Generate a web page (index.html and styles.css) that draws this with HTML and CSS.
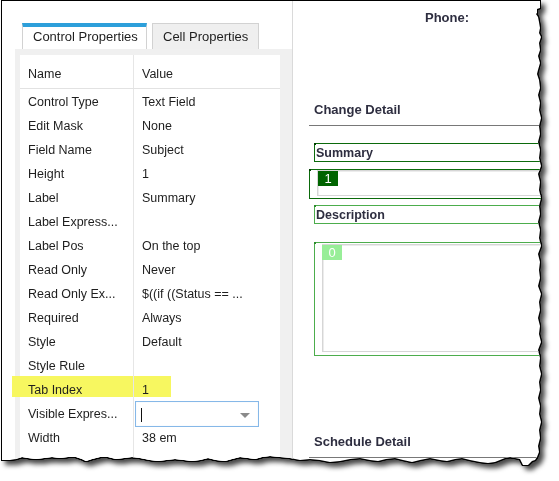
FILE: index.html
```html
<!DOCTYPE html>
<html>
<head>
<meta charset="utf-8">
<link rel="stylesheet" href="styles.css">
</head>
<body>
<div class="shot">
  <div class="paper">
    <div class="left">
      <div class="tabs">
        <div class="tab tab-active">Control Properties</div>
        <div class="tab tab-idle">Cell Properties</div>
      </div>
      <div class="panel">
        <div class="props">
          <div class="row head"><div class="c-name">Name</div><div class="c-val">Value</div></div>
          <div class="row"><div class="c-name">Control Type</div><div class="c-val">Text Field</div></div>
          <div class="row"><div class="c-name">Edit Mask</div><div class="c-val">None</div></div>
          <div class="row"><div class="c-name">Field Name</div><div class="c-val">Subject</div></div>
          <div class="row"><div class="c-name">Height</div><div class="c-val">1</div></div>
          <div class="row"><div class="c-name">Label</div><div class="c-val">Summary</div></div>
          <div class="row"><div class="c-name">Label Express...</div><div class="c-val"></div></div>
          <div class="row"><div class="c-name">Label Pos</div><div class="c-val">On the top</div></div>
          <div class="row"><div class="c-name">Read Only</div><div class="c-val">Never</div></div>
          <div class="row"><div class="c-name">Read Only Ex...</div><div class="c-val">$((if ((Status == ...</div></div>
          <div class="row"><div class="c-name">Required</div><div class="c-val">Always</div></div>
          <div class="row"><div class="c-name">Style</div><div class="c-val">Default</div></div>
          <div class="row"><div class="c-name">Style Rule</div><div class="c-val"></div></div>
          <div class="row marked"><span class="hilite"></span><div class="c-name">Tab Index</div><div class="c-val">1</div></div>
          <div class="row"><div class="c-name">Visible Expres...</div><div class="c-val c-edit"><div class="combo"><span class="caret"></span><span class="arrow"></span></div></div></div>
          <div class="row"><div class="c-name">Width</div><div class="c-val">38 em</div></div>
          <div class="row"><div class="c-name"></div><div class="c-val"></div></div>
        </div>
      </div>
    </div>
    <div class="splitter"></div>
    <div class="right">
      <div class="phone">Phone:</div>
      <div class="sect sect-change">Change Detail</div>
      <div class="lbl lbl-dark">Summary</div>
      <div class="field field-dark"><div class="inner inner-1"><span class="badge badge-dark">1</span></div></div>
      <div class="lbl lbl-light">Description</div>
      <div class="field field-light"><div class="inner inner-2"><span class="badge badge-light">0</span></div></div>
      <div class="sect sect-sched">Schedule Detail</div>
    </div>
  </div>
</div>
</body>
</html>
```
FILE: styles.css
```css
html, body {
  margin: 0;
  padding: 0;
  background: #ffffff;
}
body {
  width: 559px;
  height: 481px;
  overflow: hidden;
  font-family: "Liberation Sans", Arial, sans-serif;
  color: #1e1e1e;
}
.shot {
  width: 559px;
  height: 481px;
  filter: drop-shadow(1px 0 0 #000) drop-shadow(-1px 0 0 #000) drop-shadow(0 1px 0 #000) drop-shadow(0 -1px 0 #000) drop-shadow(4px 4px 2.5px rgba(0,0,0,0.72));
}
.paper {
  width: 559px;
  height: 481px;
  background: #ffffff;
  display: flex;
  overflow: hidden;
  clip-path: polygon(2px 1px, 540px 1px, 540px 8px, 537px 9px, 537px 13px, 536px 14px, 538px 17px, 539px 22px, 540px 28px, 539px 33px, 541px 37px, 539px 43px, 540px 50px, 538px 56px, 540px 63px, 538px 70px, 537px 74px, 539px 80px, 540px 88px, 538px 95px, 540px 103px, 539px 110px, 541px 118px, 539px 126px, 540px 134px, 538px 142px, 540px 150px, 539px 158px, 541px 166px, 538px 174px, 540px 182px, 539px 190px, 541px 198px, 539px 206px, 540px 214px, 538px 222px, 540px 230px, 539px 238px, 541px 246px, 538px 254px, 540px 262px, 539px 270px, 540px 278px, 538px 286px, 541px 294px, 539px 302px, 540px 310px, 538px 318px, 540px 326px, 539px 334px, 541px 342px, 538px 350px, 540px 358px, 539px 366px, 541px 374px, 539px 382px, 540px 390px, 538px 398px, 540px 406px, 539px 414px, 541px 422px, 539px 430px, 540px 438px, 538px 446px, 539px 452px, 537px 457px, 535px 460px, 532px 461px, 528px 465px, 523px 465px, 520px 459px, 515px 458px, 510px 457px, 505px 458px, 500px 460px, 495px 462px, 488px 463px, 480px 462px, 470px 460px, 462px 458px, 455px 459px, 447px 461px, 440px 460px, 430px 458px, 420px 460px, 412px 462px, 403px 460px, 395px 458px, 386px 459px, 378px 461px, 370px 460px, 360px 458px, 350px 459px, 340px 461px, 330px 462px, 320px 460px, 310px 459px, 300px 460px, 290px 458px, 280px 457px, 270px 456px, 262px 457px, 255px 459px, 248px 458px, 240px 457px, 232px 459px, 225px 461px, 216px 460px, 208px 458px, 200px 460px, 192px 461px, 184px 460px, 175px 459px, 166px 460px, 158px 461px, 150px 460px, 140px 458px, 132px 457px, 124px 458px, 116px 459px, 108px 457px, 100px 457px, 92px 459px, 86px 461px, 82px 459px, 76px 457px, 68px 457px, 60px 458px, 52px 457px, 44px 458px, 36px 459px, 28px 458px, 22px 457px, 16px 459px, 10px 460px, 2px 460px);
}

/* ---------- left column ---------- */
.left {
  width: 292px;
  flex: none;
  display: flex;
  flex-direction: column;
}
.tabs {
  display: flex;
  gap: 5px;
  margin: 23px 0 0 22px;
  height: 26px;
}
.tab {
  box-sizing: border-box;
  height: 26px;
  font-size: 13px;
  line-height: 20px;
  padding: 0 10px;
  white-space: nowrap;
  color: #1e1e1e;
}
.tab-active {
  width: 125px;
  background: #ffffff;
  border-top: 4px solid #2d9fda;
  border-left: 1px solid #d2d2d2;
  border-right: 1px solid #d2d2d2;
}
.tab-idle {
  width: 107px;
  background: #efefef;
  border: 1px solid #d2d2d2;
  border-bottom: none;
  line-height: 25px;
}
.panel {
  flex: 1;
  margin-left: 15px;
  background: #f0f0f0;
  padding: 6px 12px 0 5px;
}
.props {
  background: #ffffff;
  height: 100%;
  font-size: 12.5px;
}
.row {
  position: relative;
  display: grid;
  grid-template-columns: 114px 1fr;
  height: 24px;
  line-height: 26px;
}
.row.head {
  height: 33px;
  line-height: 38px;
  border-bottom: 1px solid #e2e2e2;
}
.c-name {
  position: relative;
  z-index: 1;
  padding-left: 8px;
  border-right: 1px solid #e6e6e6;
  white-space: nowrap;
  overflow: hidden;
}
.c-val {
  position: relative;
  z-index: 1;
  padding-left: 8px;
  white-space: nowrap;
  overflow: hidden;
}
.c-val.c-edit {
  padding-left: 1px;
  overflow: visible;
}
.hilite {
  position: absolute;
  left: -8px;
  top: -1px;
  width: 159px;
  height: 21px;
  background: #f7f760;
  z-index: 0;
}
.combo {
  position: relative;
  box-sizing: border-box;
  width: 124px;
  height: 26px;
  background: #ffffff;
  border: 1px solid #86b8e8;
  box-shadow: inset 0 0 1px #c5dcf4;
}
.caret {
  position: absolute;
  left: 5px;
  top: 6px;
  width: 1px;
  height: 14px;
  background: #111;
}
.arrow {
  position: absolute;
  right: 8px;
  top: 11px;
  width: 0;
  height: 0;
  border-left: 5px solid transparent;
  border-right: 5px solid transparent;
  border-top: 5px solid #8a8a8a;
}

/* ---------- splitter ---------- */
.splitter {
  width: 1px;
  flex: none;
  background: #dadada;
}

/* ---------- right column ---------- */
.right {
  flex: 1;
  min-width: 0;
  padding-left: 16px;
  display: flex;
  flex-direction: column;
  font-weight: bold;
  font-size: 13px;
  color: #2e2e40;
}
.phone {
  margin-top: 10px;
  line-height: 15px;
  padding-left: 116px;
}
.sect {
  line-height: 15px;
  padding: 0 0 8px 5px;
  border-bottom: 1px solid #787878;
}
.sect-change {
  margin-top: 77px;
}
.sect-sched {
  margin-top: 78px;
}
.lbl {
  box-sizing: border-box;
  height: 19px;
  margin-left: 5px;
  padding-left: 1px;
  line-height: 18px;
  font-size: 12.5px;
  position: relative;
}
.lbl::before, .field::before {
  content: "";
  position: absolute;
  left: -1px;
  top: -1px;
  width: 2px;
  height: 2px;
}
.lbl-dark {
  margin-top: 17px;
  border: 1px solid #0b6a0b;
}
.lbl-dark::before { background: #003f00; }
.lbl-light {
  margin-top: 6px;
  border: 1px solid #4cad4c;
}
.lbl-light::before { background: #2e8b2e; }
.field {
  position: relative;
  box-sizing: border-box;
}
.field-dark {
  margin-top: 7px;
  height: 30px;
  border: 1px solid #0b6a0b;
}
.field-dark::before { background: #003f00; }
.field-light {
  margin-top: 18px;
  margin-left: 5px;
  height: 114px;
  border: 1px solid #4cad4c;
}
.field-light::before { background: #2e8b2e; }
.inner {
  position: relative;
  box-sizing: border-box;
  border: 1px solid #d6d6d6;
  box-shadow: inset 1px 1px 0 #ececec;
}
.inner-1 {
  margin-left: 7px;
  height: 26px;
}
.inner-2 {
  margin: 1px 0 0 7px;
  height: 108px;
}
.badge {
  position: absolute;
  width: 20px;
  height: 15px;
  line-height: 15px;
  font-size: 13px;
  font-weight: normal;
  color: #ffffff;
  text-align: center;
}
.badge-dark {
  left: 0px;
  top: 0px;
  background: #006400;
}
.badge-light {
  left: -1px;
  top: 0px;
  background: #98ee98;
}
```
